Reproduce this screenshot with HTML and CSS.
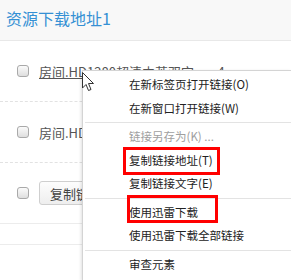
FILE: index.html
```html
<!DOCTYPE html>
<html lang="zh-CN">
<head>
    <meta charset="UTF-8" />
    <link rel="stylesheet" href="styles.css">
</head>
<body>

    <section class="panel">
        <div class="panel-head">资源下载地址1</div>
        <div class="rows">
            <div class="row dashed">
                <span class="check"></span>
                <a class="file" href="#">房间.HD1280超清中英双字.mp4</a>
            </div>
            <div class="row dashed">
                <span class="check"></span>
                <span class="file">房间.HD1280</span>
            </div>
            <div class="row">
                <span class="check"></span>
                <button class="copy">复制链接</button>
            </div>
            <div class="row empty"></div>
        </div>
    </section>

    <ul class="menu">
        <li>在新标签页打开链接(O)</li>
        <li>在新窗口打开链接(W)</li>
        <li class="sep"></li>
        <li class="off">链接另存为(K) ...</li>
        <li>复制链接地址(T)</li>
        <li>复制链接文字(E)</li>
        <li class="sep"></li>
        <li>使用迅雷下载</li>
        <li>使用迅雷下载全部链接</li>
        <li class="sep"></li>
        <li>审查元素</li>
    </ul>

    <div class="mark mark-1"></div>
    <div class="mark mark-2"></div>

    <svg class="cursor" width="13" height="20" viewBox="0 0 13 20">
        <path d="M0.5 0.5 L0.5 16 L4 12.5 L6.5 18.5 L9 17.5 L6.5 11.5 L11.5 11.5 Z" fill="#fff" stroke="#333" stroke-width="1" stroke-linejoin="round" />
    </svg>

</body>
</html>
```

FILE: styles.css
```css
html,
body {
    padding: 0;
    margin: 0;
    height: 100%;
    overflow: hidden;
}
body {
    background: #fff;
    font-family: "Noto Sans CJK SC", "Liberation Sans", sans-serif;
    color: #555;
}
.panel-head {
    height: 40px;
    line-height: 36px;
    padding-left: 6px;
    background: #f8f8f8;
    border-bottom: 1px solid #e8e8e8;
    font-size: 16px;
    color: #3590d4;
}
.row {
    display: flex;
    align-items: center;
    height: 60px;
    padding-left: 17px;
    border-bottom: 1px solid #ececec;
}
.row.dashed {
    border-bottom: 1px dashed #e2e2e2;
}
.row.empty {
    height: 20px;
}
.check {
    width: 10px;
    height: 10px;
    border: 1px solid #a9a9a9;
    border-radius: 3px;
    background: linear-gradient(#fbfbfb, #dedede);
    margin-right: 10px;
}
.file {
    font-size: 13px;
    color: #555;
    white-space: nowrap;
}
.copy {
    height: 24px;
    padding: 0 10px;
    font-family: inherit;
    font-size: 13px;
    color: #444;
    background: linear-gradient(#fdfdfd, #eeeeee);
    border: 1px solid #cfcfcf;
    border-radius: 3px;
}
.menu {
    position: absolute;
    left: 82px;
    top: 70px;
    right: 0;
    bottom: 0;
    margin: 0;
    padding: 2px 0 0;
    list-style: none;
    background: #fff;
    border-left: 1px solid #d4d4d4;
    border-top: 1px solid #d4d4d4;
    box-shadow: -1px 1px 3px rgba(0, 0, 0, 0.12);
}
.menu li {
    height: 23.5px;
    line-height: 23px;
    padding-left: 46px;
    font-size: 11.5px;
    color: #222;
    white-space: nowrap;
}
.menu li.off {
    color: #a0a0a0;
}
.menu li.sep {
    height: 1px;
    margin: 2px 0 2px 2px;
    background: #e3e3e3;
}
.mark {
    position: absolute;
    border: 3px solid #f00;
}
.mark-1 {
    left: 123px;
    top: 147px;
    width: 91px;
    height: 22px;
}
.mark-2 {
    left: 127px;
    top: 195px;
    width: 85px;
    height: 22px;
}
.cursor {
    position: absolute;
    left: 82px;
    top: 72px;
}
```
